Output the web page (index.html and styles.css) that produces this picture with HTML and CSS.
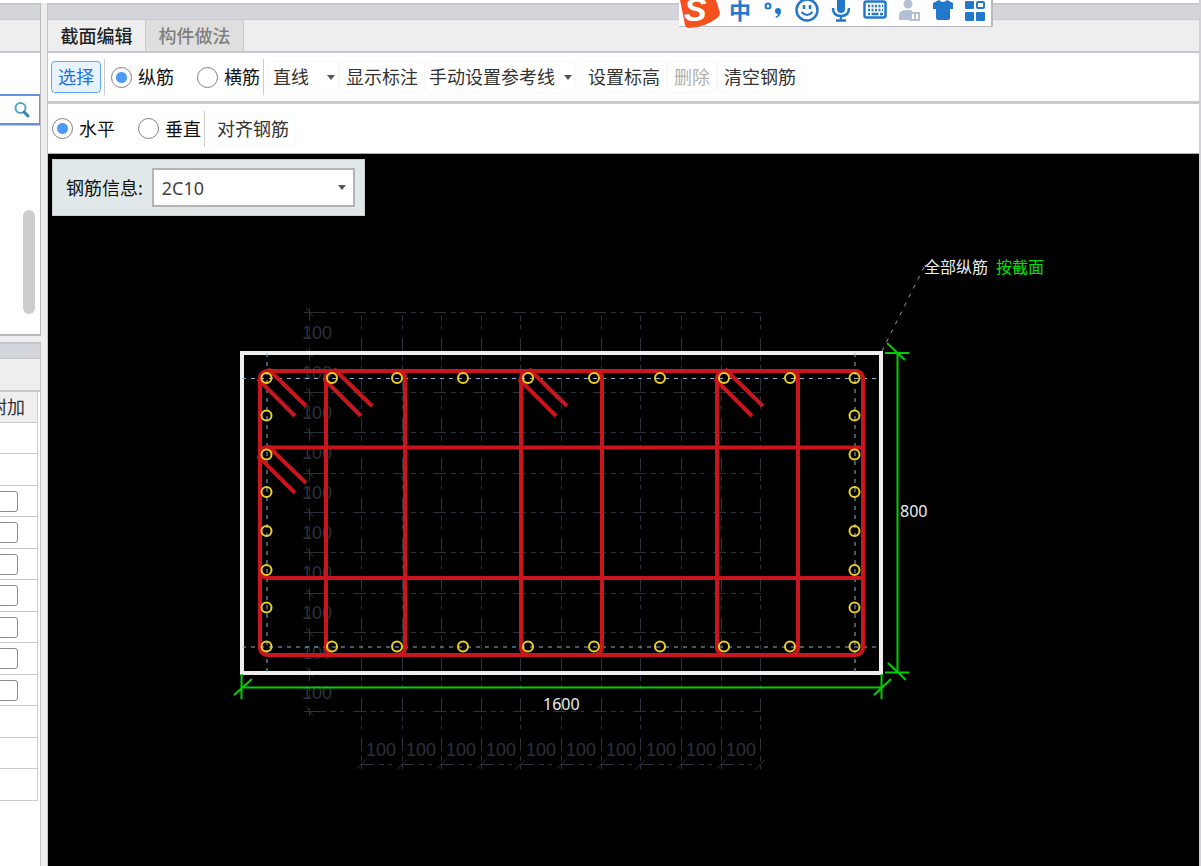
FILE: index.html
```html
<!DOCTYPE html>
<html lang="zh-CN">
<head>
<meta charset="utf-8">
<title>截面编辑</title>
<link rel="stylesheet" href="styles.css">
</head>
<body>
<div class="app">
  <aside class="side">
    <section class="side-top">
      <div class="band"></div>
      <div class="strip"></div>
      <div class="spacer"></div>
      <div class="search">
        <button class="search-btn" type="button" aria-label="搜索">
          <svg width="18" height="18" viewBox="0 0 18 18" fill="none"><circle cx="7.500" cy="7" r="5" stroke="#55a0c6" stroke-width="2"/><path d="M11 11l4 4" stroke="#2f86b4" stroke-width="3" stroke-linecap="round"/></svg>
        </button>
      </div>
      <div class="list"><div class="thumb"></div></div>
    </section>
    <section class="side-bottom">
      <div class="band"></div>
      <div class="strip"></div>
      <table class="props">
        <thead><tr><th><span>附加</span></th></tr></thead>
        <tbody>
          <tr><td></td></tr>
          <tr><td></td></tr>
          <tr><td><input type="checkbox" aria-label="附加 3"></td></tr>
          <tr><td><input type="checkbox" aria-label="附加 4"></td></tr>
          <tr><td><input type="checkbox" aria-label="附加 5"></td></tr>
          <tr><td><input type="checkbox" aria-label="附加 6"></td></tr>
          <tr><td><input type="checkbox" aria-label="附加 7"></td></tr>
          <tr><td><input type="checkbox" aria-label="附加 8"></td></tr>
          <tr><td><input type="checkbox" aria-label="附加 9"></td></tr>
          <tr><td></td></tr>
          <tr><td></td></tr>
          <tr><td></td></tr>
        </tbody>
      </table>
    </section>
  </aside>
  <main class="main">
    <div class="band"></div>
    <nav class="tabs">
      <button class="tab active" type="button">截面编辑</button>
      <button class="tab" type="button">构件做法</button>
    </nav>
    <div class="toolbar">
      <button class="tool selected" type="button">选择</button>
      <i class="sep"></i>
      <label class="radio first"><input type="radio" name="bar" checked>纵筋</label>
      <label class="radio"><input type="radio" name="bar">横筋</label>
      <i class="sep"></i>
      <button class="tool drop" type="button">直线<i class="caret"></i></button>
      <button class="tool" type="button">显示标注</button>
      <button class="tool drop guide" type="button">手动设置参考线<i class="caret"></i></button>
      <button class="tool" type="button">设置标高</button>
      <button class="tool" type="button" disabled>删除</button>
      <button class="tool" type="button">清空钢筋</button>
    </div>
    <div class="toolbar second">
      <label class="radio"><input type="radio" name="dir" checked>水平</label>
      <label class="radio"><input type="radio" name="dir">垂直</label>
      <i class="sep"></i>
      <button class="tool" type="button">对齐钢筋</button>
    </div>
    <div class="canvas">
      <svg class="drawing" id="drawing" role="img" aria-label="截面配筋图">
        <g transform="translate(-48 -154)">
          <g id="grid" class="grid"></g>
          <rect class="outline" x="242" y="353" width="639" height="320"/>
          <path class="axis" d="M242 378.500H881M242 647H881M267 353V672M855 353V672"/>
          <g class="rebar">
            <rect x="260" y="371" width="603" height="284" rx="7"/>
            <rect x="326" y="371" width="79" height="284" rx="7"/>
            <rect x="521" y="371" width="81" height="284" rx="7"/>
            <rect x="717" y="371" width="81" height="284" rx="7"/>
            <path d="M266 447.500H863M266 578H863M260 454q0-6 7-7M260 571q0 6 7 7"/>
            <g id="hooks"></g>
          </g>
          <g id="dots" class="dots"></g>
          <g class="dim">
            <path d="M242 687.500H881M241.500 674v25M881.500 674v25M234 695l18-16M874 695l17-16"/>
            <path d="M897.500 353V672M885 353h24M885 672.500h24M887 343l18 17M888 663l18 17"/>
          </g>
          <path class="leader" d="M882 351L924 267"/>
          <text class="val" x="543" y="710">1600</text>
          <text class="val" x="900" y="517">800</text>
          <text class="note" x="924" y="273">全部纵筋</text>
          <text class="note green" x="996" y="273">按截面</text>
        </g>
      </svg>
      <div class="info">
        <label for="rebar">钢筋信息:</label>
        <div class="combo"><select id="rebar"><option>2C10</option></select><i class="caret"></i></div>
      </div>
    </div>
  </main>
</div>
<div class="ime">
  <svg class="logo" width="42" height="28" viewBox="0 0 42 28"><path d="M1 0H37L41 13Q41 16 38 18Q27 27 10 28Q7 28 6 25Z" fill="#f4511e"/><text x="5" y="21" class="logo-s">S</text></svg>
  <span class="zh">中</span>
  <svg width="20" height="26" viewBox="0 0 20 26"><circle cx="5" cy="6" r="2.500" fill="none" stroke="#2378cc" stroke-width="2"/><path d="M15 8a3 3 0 0 1 3 3q0 5-5 7l-.5-1.500q2.500-1 2.500-2.500a3 3 0 0 1 0-6z" fill="#2378cc"/></svg>
  <svg width="24" height="26" viewBox="0 0 24 26" fill="none" stroke="#2378cc"><circle cx="12" cy="10" r="10.500" stroke-width="2.500"/><path d="M9 5v4M15 5v4" stroke-width="2.500"/><path d="M6.500 12q5.500 6 11 0" stroke-width="2"/></svg>
  <svg width="20" height="26" viewBox="0 0 20 26"><rect x="6" y="-4" width="8" height="17" rx="4" fill="#2378cc"/><path d="M2 8q0 8 8 8t8-8M10 16v5M5 20.500h10" fill="none" stroke="#2378cc" stroke-width="2.500"/></svg>
  <svg width="24" height="26" viewBox="0 0 24 26"><rect x="1.500" y="1.500" width="21" height="16" rx="2" fill="none" stroke="#2378cc" stroke-width="2.500"/><path d="M5 6h15M5 10h15" stroke="#2378cc" stroke-width="2.500" stroke-dasharray="2 1.500"/><path d="M5 14h2M8.500 14h7M17 14h3" stroke="#2378cc" stroke-width="2.500"/></svg>
  <svg width="22" height="26" viewBox="0 0 22 26"><circle cx="9" cy="4" r="4.500" fill="#b4bfd3"/><path d="M0 20v-4q0-6 7-6h5l2 2h-3v8z" fill="#b4bfd3"/><path d="M12 13h8v7h-8zM16 13v7" fill="#fff" stroke="#b4bfd3" stroke-width="2"/></svg>
  <svg width="20" height="26" viewBox="0 0 20 26"><path d="M6 0Q10 4 14 0L20 3V9H17V18Q17 20 15 20H5Q3 20 3 18V9H0V3Z" fill="#2378cc"/></svg>
  <svg width="20" height="26" viewBox="0 0 20 26" fill="#2378cc"><rect y="1" width="9" height="8" rx="1"/><rect x="12" y="2" width="7" height="6" rx="1" fill="none" stroke="#2378cc" stroke-width="2"/><rect y="12" width="9" height="9" rx="1"/><rect x="11" y="12" width="9" height="9" rx="1"/></svg>
</div>
<script src="drawing.js"></script>
</body>
</html>
```
FILE: styles.css
```css
* { box-sizing: border-box; }
body {
  margin: 0;
  background: #fff;
  font-family: "Noto Sans", "Noto Sans CJK SC", sans-serif;
  font-size: 18px;
  line-height: 24px;
  color: #111;
}
button, input, select { font: inherit; color: inherit; margin: 0; }
i { font-style: normal; }
.app {
  display: flex;
  height: 100vh;
  padding-top: 3px;
  background: #eee;
  border-right: 2px solid #d0d2d8;
  box-shadow: inset 0 3px #fff;
}
.band {
  height: 17px;
  flex: none;
  background: #d3d5db;
  border-top: 2px solid #c4c8cc;
  border-bottom: 1px solid #c6cacf;
}
.side {
  width: 41px;
  flex: none;
  display: flex;
  flex-direction: column;
  gap: 6px;
  overflow: hidden;
}
.side-top {
  height: 333px;
  flex: none;
  display: flex;
  flex-direction: column;
  border-right: 1px solid #bbb;
  border-bottom: 2px solid #bbb;
}
.side-bottom {
  flex: 1;
  background: #fff;
  border-right: 1px solid #c4c4c4;
}
.strip { height: 33px; flex: none; background: #eee; border-bottom: 2px solid #c6c9cf; }
.spacer { height: 41px; background: #fff; }
.search {
  height: 31px;
  display: flex;
  align-items: center;
  justify-content: flex-end;
  background: #fff;
  border: 2px solid #6b8fe0;
  border-left: 0;
  border-right-width: 1px;
}
.search-btn { width: 18px; height: 18px; padding: 0; margin-right: 8px; border: 0; background: none; display: flex; }
.list { flex: 1; background: #fff; border-top: 1px solid #c8c8c8; padding: 84px 5px 0 0; }
.thumb { width: 12px; height: 104px; margin-left: auto; border-radius: 6px; background: #cdcdcd; }
.props { width: 38px; border-collapse: separate; border-spacing: 0; table-layout: fixed; }
.props th, .props td { padding: 0; border-right: 1px solid #ccc; border-bottom: 1px solid #ccc; overflow: hidden; }
.props th { height: 31px; background: #eee; font-weight: 400; line-height: 30px; }
.props th span { display: block; width: 36px; margin-left: -11px; color: #333; white-space: nowrap; }
.props td { height: 32px; }
.props tr:nth-child(odd) td { height: 31px; }
.props input {
  appearance: none;
  display: block;
  width: 21px;
  height: 21px;
  margin-left: -3px;
  border: 1px solid #8c8c8c;
  border-radius: 3px;
  background: #fff;
}
.main {
  flex: 1;
  min-width: 0;
  display: flex;
  flex-direction: column;
  margin-left: 6px;
  border-left: 1px solid #c0c2c6;
}
.tabs { display: flex; height: 33px; flex: none; background: #eee; border-bottom: 2px solid #c6c9cf; }
.tab { border: 0; border-right: 1px solid #c8cacd; background: #dfdfdf; color: #808080; width: 98px; padding: 0; font-weight: 500; }
.tab.active { background: #eee; color: #222; }
.toolbar {
  height: 51px;
  flex: none;
  display: flex;
  align-items: center;
  background: #fff;
  border-bottom: 3px solid #c8cad0;
  padding-left: 3px;
  white-space: nowrap;
}
.toolbar.second { height: 50px; border-bottom: 1px solid #aaadb0; padding-left: 4px; }
.tool {
  height: 32px;
  border: 1px solid #f8f8f8;
  border-radius: 4px;
  background: #fff;
  padding: 0 6px;
  color: #333;
}
.tool.selected { background: #e8f3ff; border-color: #5aa5f8; color: #1c74d8; margin-right: 3px; }
.tool:disabled { color: #b0b0b0; }
.tool.drop { display: flex; align-items: center; gap: 18px; padding: 0 3px; margin-left: 5px; }
.tool.guide { gap: 9px; margin: 0 5px 0 0; }
.caret { width: 8px; border: solid transparent; border-width: 5px 4px 0; border-top-color: #555; }
.sep { width: 1px; height: 36px; background: #ccc; }
.radio { display: flex; align-items: center; gap: 6px; margin-right: 23px; }
.radio.first { margin-left: 6px; }
.radio:has(+ .sep) { margin-right: 3px; }
.radio input {
  appearance: none;
  width: 21px;
  height: 21px;
  border: 1px solid #808080;
  border-radius: 50%;
  background: #fff;
}
.radio input:checked { background: radial-gradient(circle, #4d9bf8 0 5px, #fff 6px); }
.second .tool { margin-left: 5px; }
.canvas { flex: 1; min-height: 0; background: #000; position: relative; overflow: hidden; padding: 5px 4px; }
.drawing { position: absolute; inset: 0; width: 100%; height: 100%; }
.info {
  position: relative;
  display: inline-flex;
  align-items: center;
  gap: 9px;
  height: 57px;
  padding: 0 9px 0 13px;
  background: #e0e8ea;
  border: 1px solid #c8d0d2;
}
.combo { position: relative; }
.combo select {
  appearance: none;
  width: 203px;
  height: 39px;
  padding: 0 8px;
  border: 2px solid #b4b4b4;
  border-radius: 0;
  background: #fff;
  color: #444;
}
.combo .caret { position: absolute; right: 9px; top: 17px; }
.grid path { fill: none; stroke: #2c323d; stroke-width: 1; }
.grid .dash { stroke-dasharray: 13 5 5 4 4 9; }
.grid text { font: 18px "Liberation Sans", sans-serif; fill: #2c323d; }
.outline { fill: none; stroke: #eee; stroke-width: 4; }
.axis { stroke: #8fb0d4; stroke-width: 1; stroke-dasharray: 4 5; }
.rebar { fill: none; stroke: #c9161e; stroke-width: 4; }
.dots circle { fill: none; stroke: #ecd022; stroke-width: 2; }
.dim { fill: none; stroke: #00d000; stroke-width: 1; }
.dim path { stroke-width: 2; }
.leader { stroke: #999; stroke-width: 1; stroke-dasharray: 4 6; }
.val { font-size: 16px; fill: #eee; }
.note { font-size: 16px; fill: #eee; }
.note.green { fill: #00e000; }
.ime {
  position: absolute;
  top: 0;
  left: 679px;
  height: 27px;
  display: flex;
  gap: 12px;
  padding-right: 6px;
  background: #fff;
  border: solid #b8babf;
  border-width: 0 2px 1px 0;
}
.ime svg { flex: none; }
.logo { overflow: visible; margin-right: -4px; }
.logo-s { font: italic 700 34px "Liberation Sans", sans-serif; fill: #fff; }
.zh { color: #2378cc; font-weight: 700; font-size: 22px; line-height: 20px; }
```
FILE: drawing.js
```js
const xs = [361.5, 402.5, 441.5, 481.5, 520.5, 561.5, 601.5, 640.5, 681.5, 721.5, 760.5];
const ys = [312.5, 353.5, 392.5, 432.5, 473.5, 512.5, 552.5, 593.5, 632.5, 672.5, 711.5];
let grid = '';
for (const x of xs) {
  grid += `<path class="dash" stroke-dashoffset="14" d="M${x} 312V769"/><path d="M${x - 5} 769l9-9"/>`;
}
for (const y of ys) {
  grid += `<path class="dash" d="M313 ${y}H761"/><path d="M304 ${y}h9M306 ${y - 5}l7 9"/>`;
}
grid += '<path class="dash" d="M309.500 308V716M361 764.500H761"/>';
for (let i = 0; i < 10; i++) {
  grid += `<text x="302" y="${339 + i * 40}">100</text><text x="${366 + i * 40}" y="756">100</text>`;
}
document.getElementById('grid').innerHTML = grid;

const hooks = [[260, 371], [326, 371], [521, 371], [717, 371], [260, 448]];
document.getElementById('hooks').innerHTML = hooks
  .map(([x, y]) => `<path d="M${x - 2} ${y + 8}L${x + 35} ${y + 45}M${x + 8} ${y - 2}L${x + 46} ${y + 35}"/>`).join('');

const cols = [266.5, 332, 397, 463, 528, 594, 660, 724, 790, 854.5];
const rows = [415.5, 454.5, 492, 531, 570, 607.5];
const points = cols.flatMap(x => [[x, 378], [x, 646.5]])
  .concat(rows.flatMap(y => [[266.5, y], [854.5, y]]));
document.getElementById('dots').innerHTML = points
  .map(([x, y]) => `<circle cx="${x}" cy="${y}" r="5"/>`).join('');
```
